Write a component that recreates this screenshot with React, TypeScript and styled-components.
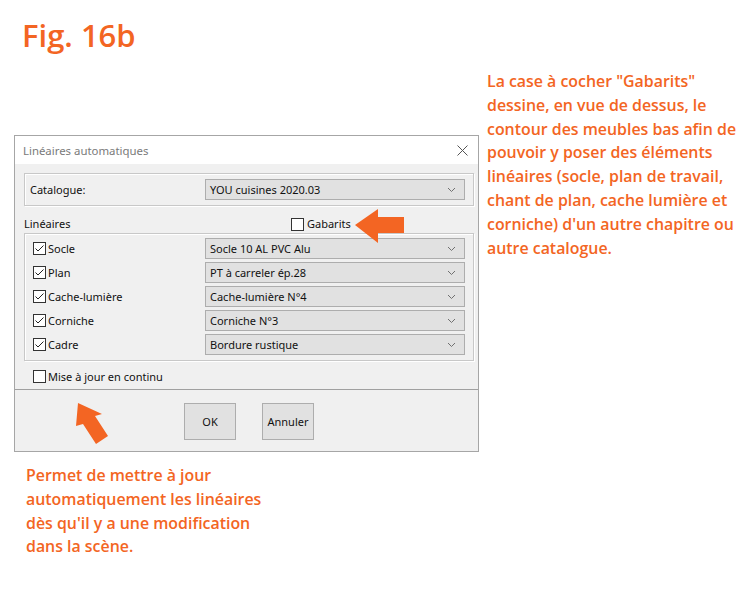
import styled, { createGlobalStyle } from "styled-components";

const orange = "#f36523";
const uiFont = `"Noto Sans", "Open Sans", sans-serif`;

const GlobalStyle = createGlobalStyle`
  body {
    margin: 0;
    background: #ffffff;
  }
`;

const Page = styled.div`
  width: 750px;
  height: 600px;
  display: flex;
  flex-direction: row;
  font-family: "Open Sans", sans-serif;
  overflow: hidden;
`;

const LeftCol = styled.div`
  width: 466px;
  padding-left: 14px;
  display: flex;
  flex-direction: column;
`;

const RightCol = styled.div`
  padding-top: 70px;
  padding-left: 7px;
`;

const FigTitle = styled.h1`
  margin: 15px 0 0 8px;
  height: 40px;
  font-size: 31px;
  line-height: 40px;
  font-weight: 600;
  color: ${orange};
`;

const Note = styled.p<{ $indent?: number }>`
  margin: 0;
  padding-left: ${(p) => p.$indent ?? 0}px;
  font-size: 15.9px;
  line-height: 23.8px;
  font-weight: 600;
  color: ${orange};
  white-space: nowrap;
`;

const Dialog = styled.div`
  position: relative;
  margin-top: 80px;
  width: 465px;
  height: 317px;
  box-sizing: border-box;
  border: 1px solid #a6a6a6;
  background: #f0f0f0;
  display: flex;
  flex-direction: column;
  font-family: ${uiFont};
  font-size: 11px;
  color: #111111;
`;

const TitleBar = styled.div`
  height: 28px;
  background: #ffffff;
  display: flex;
  align-items: center;
  justify-content: space-between;
  padding: 1px 10px 0 8px;
  box-sizing: border-box;
  color: #7a7a7a;
  font-size: 11.4px;
`;

const Body = styled.div`
  padding: 9px 4px 0 9px;
  display: flex;
  flex-direction: column;
`;

const GroupBox = styled.div<{ $pad: string }>`
  box-sizing: border-box;
  width: 450px;
  border: 1px solid #c8c8c8;
  box-shadow: inset 1px 1px 0 #ffffff, 1px 1px 0 #ffffff;
  padding: ${(p) => p.$pad};
  display: flex;
  flex-direction: column;
  gap: 3px;
`;

const FieldRow = styled.div`
  display: flex;
  align-items: center;
  height: 21px;
`;

const FieldLabel = styled.div<{ $width: number }>`
  width: ${(p) => p.$width}px;
  display: flex;
  align-items: center;
  gap: 2px;
`;

const Select = styled.div`
  box-sizing: border-box;
  width: 260px;
  height: 21px;
  border: 1px solid #adadad;
  background: #e1e1e1;
  display: flex;
  align-items: center;
  justify-content: space-between;
  padding: 0 8px 0 4px;
`;

const SectionHeader = styled.div`
  height: 27px;
  box-sizing: border-box;
  padding-bottom: 1px;
  display: flex;
  align-items: flex-end;
`;

const SectionTitle = styled.span`
  width: 267px;
  line-height: 16px;
`;

const HeaderCheck = styled.div`
  display: flex;
  align-items: center;
  gap: 3px;
  line-height: 16px;
`;

const Box = styled.div`
  box-sizing: border-box;
  width: 13px;
  height: 13px;
  border: 1px solid #333333;
  background: #ffffff;
  display: flex;
  align-items: center;
  justify-content: center;
`;

const StandaloneCheck = styled.div`
  margin: 9px 0 0 9px;
  height: 13px;
  display: flex;
  align-items: center;
  gap: 2px;
`;

const Footer = styled.div`
  margin-top: auto;
  height: 62px;
  box-sizing: border-box;
  border-top: 1px solid #a0a0a0;
  display: flex;
  justify-content: center;
  align-items: flex-start;
  padding: 13px 0 0 5px;
  gap: 26px;
`;

const Button = styled.div`
  box-sizing: border-box;
  width: 52px;
  height: 37px;
  border: 1px solid #adadad;
  background: #e1e1e1;
  display: flex;
  align-items: center;
  justify-content: center;
`;

const Arrow = styled.svg<{ $left: number; $top: number }>`
  position: absolute;
  left: ${(p) => p.$left}px;
  top: ${(p) => p.$top}px;
  overflow: visible;
`;

const Chevron = () => (
  <svg width="9" height="6" viewBox="0 0 9 6">
    <polyline points="1,1 4.5,4.5 8,1" fill="none" stroke="#707070" strokeWidth="1" />
  </svg>
);

const CheckBox = ({ checked }: { checked?: boolean }) => (
  <Box>
    {checked && (
      <svg width="11" height="11" viewBox="0 0 11 11">
        <polyline points="1.5,5.5 4,8 9.5,2.5" fill="none" stroke="#222" strokeWidth="1" />
      </svg>
    )}
  </Box>
);

const lineaires = [
  { name: "Socle", value: "Socle 10 AL PVC Alu" },
  { name: "Plan", value: "PT à carreler ép.28" },
  { name: "Cache-lumière", value: "Cache-lumière N°4" },
  { name: "Corniche", value: "Corniche N°3" },
  { name: "Cadre", value: "Bordure rustique" },
];

const rightNote = [
  'La case à cocher "Gabarits"',
  "dessine, en vue de dessus, le",
  "contour des meubles bas afin de",
  "pouvoir y poser des éléments",
  "linéaires (socle, plan de travail,",
  "chant de plan, cache lumière et",
  "corniche) d'un autre chapitre ou",
  "autre catalogue.",
];

const bottomNote = [
  "Permet de mettre à jour",
  "automatiquement les linéaires",
  "dès qu'il y a une modification",
  "dans la scène.",
];

const Lines = ({ lines }: { lines: string[] }) => (
  <>
    {lines.map((l, i) => (
      <span key={i}>
        {l}
        {i < lines.length - 1 && <br />}
      </span>
    ))}
  </>
);

export default function App() {
  return (
    <Page>
      <GlobalStyle />
      <LeftCol>
        <FigTitle>Fig. 16b</FigTitle>
        <Dialog>
          <TitleBar>
            <span>Linéaires automatiques</span>
            <svg width="11" height="11" viewBox="0 0 11 11">
              <path d="M0.5 0.5 L10.5 10.5 M10.5 0.5 L0.5 10.5" stroke="#555" strokeWidth="1" />
            </svg>
          </TitleBar>
          <Body>
            <GroupBox $pad="5px 8px 5px 5px">
              <FieldRow>
                <FieldLabel $width={175}>Catalogue:</FieldLabel>
                <Select>
                  <span>YOU cuisines 2020.03</span>
                  <Chevron />
                </Select>
              </FieldRow>
            </GroupBox>
            <SectionHeader>
              <SectionTitle>Linéaires</SectionTitle>
              <HeaderCheck>
                <CheckBox />
                <span>Gabarits</span>
              </HeaderCheck>
            </SectionHeader>
            <GroupBox $pad="4px 8px 5px 8px">
              {lineaires.map((l) => (
                <FieldRow key={l.name}>
                  <FieldLabel $width={172}>
                    <CheckBox checked />
                    <span>{l.name}</span>
                  </FieldLabel>
                  <Select>
                    <span>{l.value}</span>
                    <Chevron />
                  </Select>
                </FieldRow>
              ))}
            </GroupBox>
            <StandaloneCheck>
              <CheckBox />
              <span>Mise à jour en continu</span>
            </StandaloneCheck>
          </Body>
          <Footer>
            <Button>OK</Button>
            <Button>Annuler</Button>
          </Footer>
          <Arrow $left={339} $top={72} width="51" height="36" viewBox="0 0 51 36">
            <polygon points="1,17 24,1 24,9 50,9 50,25 24,25 24,35" fill={orange} />
          </Arrow>
          <Arrow $left={58} $top={265} width="38" height="46" viewBox="0 0 38 46">
            <polygon points="5,2 3,25 10,23 23,43 35,35 22,15 29,13" fill={orange} />
          </Arrow>
        </Dialog>
        <Note $indent={12} style={{ marginTop: 12 }}>
          <Lines lines={bottomNote} />
        </Note>
      </LeftCol>
      <RightCol>
        <Note>
          <Lines lines={rightNote} />
        </Note>
      </RightCol>
    </Page>
  );
}
